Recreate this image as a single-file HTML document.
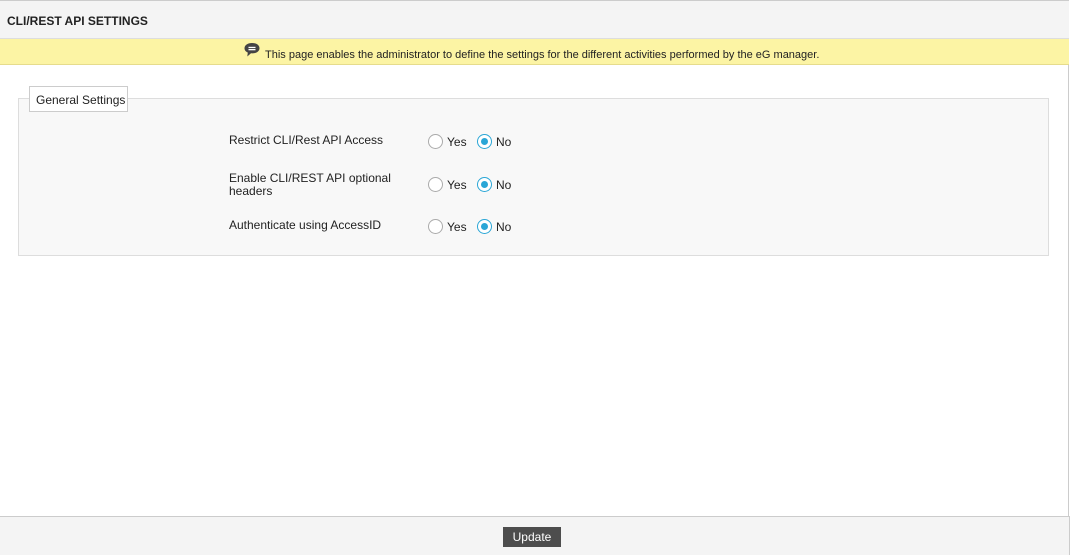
<!DOCTYPE html>
<html><head><meta charset="utf-8"><style>
*{box-sizing:border-box;margin:0;padding:0}
body{width:1070px;height:555px;background:#fff;font-family:"Liberation Sans",Arial,sans-serif;font-size:12px;color:#222;position:relative;overflow:hidden}
.wrap{position:absolute;left:0;top:0;width:1069px;height:555px;border-top:1px solid #ccc;border-right:1px solid #ccc}
.hdr{position:absolute;left:0;top:1px;width:1069px;height:38px;background:#f4f4f4;border-bottom:1px solid #ddd;font-weight:bold;font-size:12px;padding:13px 0 0 7px}
.ban{position:absolute;left:0;top:39px;width:1069px;height:26px;background:#fcf4a4;border-bottom:1px solid #e6dc8c;font-size:11px}
.ban span{position:absolute;left:265px;top:10px;white-space:nowrap}
.ban svg{position:absolute;left:243px;top:3px}
.fs{position:absolute;left:18px;top:98px;width:1031px;height:158px;background:#f8f8f8;border:1px solid #ddd}
.lg{position:absolute;left:29px;top:86px;width:99px;height:26px;background:#fff;border:1px solid #ccc;font-size:12px;padding:6px 0 0 6px}
.lab{position:absolute;left:229px;font-size:12px;line-height:13px}
.r{position:absolute;width:15px;height:15px;border-radius:50%;border:1px solid #aaa;background:#fff}
.r.on{border-color:#2aa6d6}
.r.on::after{content:"";position:absolute;left:3px;top:3px;width:7px;height:7px;border-radius:50%;background:#2aa6d6}
.t{position:absolute;font-size:12px}
.ft{position:absolute;left:0;top:516px;width:1070px;height:39px;background:#f4f4f4;border-top:1px solid #ccc;border-right:1px solid #ccc}
.btn{position:absolute;left:503px;top:527px;width:58px;height:20px;background:#4d4d4d;color:#fff;font-size:12px;text-align:center;line-height:20px}
</style></head><body>
<div class="wrap"></div>
<div class="hdr">CLI/REST API SETTINGS</div>
<div class="ban"><svg width="18" height="17" viewBox="0 0 18 17"><path d="M9 1C4.6 1 1.5 3.2 1.5 6.2c0 1.9 1.3 3.5 3.3 4.3L4.3 14.5 8 11.3c.3 0 .7.1 1 .1 4.4 0 7.5-2.2 7.5-5.2S13.4 1 9 1z" fill="#444"/><rect x="5.5" y="4.8" width="7" height="1.3" fill="#fff"/><rect x="5.5" y="7" width="7" height="1.3" fill="#fff"/></svg><span>This page enables the administrator to define the settings for the different activities performed by the eG manager.</span></div>
<div class="fs"></div>
<div class="lg">General Settings</div>

<div class="lab" style="top:134px">Restrict CLI/Rest API Access</div>
<div class="r" style="left:428px;top:134px"></div><div class="t" style="left:447px;top:135px">Yes</div>
<div class="r on" style="left:477px;top:134px"></div><div class="t" style="left:496px;top:135px">No</div>

<div class="lab" style="top:172px">Enable CLI/REST API optional<br>headers</div>
<div class="r" style="left:428px;top:177px"></div><div class="t" style="left:447px;top:178px">Yes</div>
<div class="r on" style="left:477px;top:177px"></div><div class="t" style="left:496px;top:178px">No</div>

<div class="lab" style="top:219px">Authenticate using AccessID</div>
<div class="r" style="left:428px;top:219px"></div><div class="t" style="left:447px;top:220px">Yes</div>
<div class="r on" style="left:477px;top:219px"></div><div class="t" style="left:496px;top:220px">No</div>

<div class="ft"></div>
<div class="btn">Update</div>
</body></html>
